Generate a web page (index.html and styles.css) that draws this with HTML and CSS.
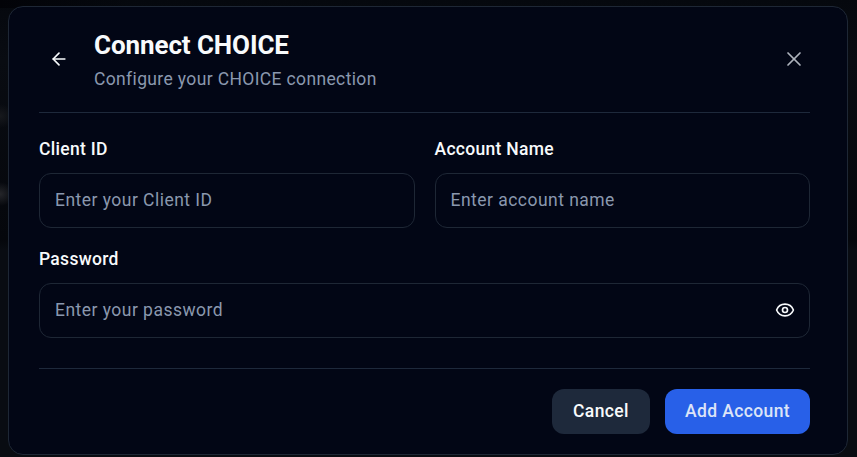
FILE: index.html
```html
<!DOCTYPE html>
<html lang="en">
<head>
    <meta charset="UTF-8">
    <meta name="viewport" content="width=device-width, initial-scale=1.0">
    <title>Connect CHOICE</title>
    <link rel="stylesheet" href="styles.css">
</head>
<body>
    <div class="modal">
        <div class="modal-header">
            <button type="button" class="icon-button" aria-label="Back">
                <svg width="20" height="20" viewBox="0 0 24 24" fill="none" stroke="currentColor" stroke-width="2" stroke-linecap="round" stroke-linejoin="round"><path d="m12 19-7-7 7-7"/><path d="M19 12H5"/></svg>
            </button>
            <div class="heading">
                <h1>Connect CHOICE</h1>
                <p>Configure your CHOICE connection</p>
            </div>
            <button type="button" class="icon-button close" aria-label="Close">
                <svg width="24" height="24" viewBox="0 0 24 24" fill="none" stroke="currentColor" stroke-width="1.7" stroke-linecap="round" stroke-linejoin="round"><path d="M18 6 6 18"/><path d="m6 6 12 12"/></svg>
            </button>
        </div>
        <form>
            <div class="fields">
                <div class="field">
                    <label for="client-id">Client ID</label>
                    <input type="text" id="client-id" placeholder="Enter your Client ID">
                </div>
                <div class="field">
                    <label for="account-name">Account Name</label>
                    <input type="text" id="account-name" placeholder="Enter account name">
                </div>
                <div class="field full">
                    <label for="password">Password</label>
                    <div class="password-box">
                        <input type="password" id="password" placeholder="Enter your password">
                        <button type="button" class="toggle" aria-label="Show password">
                            <svg width="20" height="20" viewBox="0 0 24 24" fill="none" stroke="currentColor" stroke-width="2" stroke-linecap="round" stroke-linejoin="round"><path d="M2.062 12.348a1 1 0 0 1 0-.696 10.75 10.75 0 0 1 19.876 0 1 1 0 0 1 0 .696 10.75 10.75 0 0 1-19.876 0"/><circle cx="12" cy="12" r="3"/></svg>
                        </button>
                    </div>
                </div>
            </div>
            <div class="modal-footer">
                <button type="button" class="btn cancel">Cancel</button>
                <button type="submit" class="btn primary">Add Account</button>
            </div>
        </form>
    </div>
</body>
</html>
```
FILE: styles.css
```css
* {
    box-sizing: border-box;
}
body {
    margin: 0;
    padding: 6px 9px 0 8px;
    height: 457px;
    overflow: hidden;
    font-family: Roboto, sans-serif;
    font-size: 17.5px;
    color: #f8fafc;
    /* blurred page behind the dialog */
    background:
        radial-gradient(ellipse 14px 12px at 0 116px, #17191d, transparent),
        radial-gradient(ellipse 14px 12px at 0 194px, #25262a, transparent),
        linear-gradient(90deg, #020308, transparent 130px) 0 0 / 100% 8px no-repeat,
        linear-gradient(#05080e, #090c12 60px, #05070c 240px, #090c12 250px);
}
button, input {
    font: inherit;
    color: inherit;
}
.modal {
    height: 449px;
    padding: 0 37px 0 30px;
    background-color: #020615;
    border: 1px solid #1e2735;
    border-radius: 15px;
}
.modal-header {
    display: flex;
    align-items: center;
    height: 106px;
    padding-bottom: 2px;
    border-bottom: 1px solid #1e293b;
}
.icon-button {
    display: flex;
    align-items: center;
    justify-content: center;
    width: 40px;
    height: 40px;
    padding: 0;
    border: none;
    background: none;
}
.close {
    width: 32px;
    color: #aeb3bd;
}
.heading {
    flex: 1;
    padding: 6px 0 0 15px;
}
h1 {
    margin: 0;
    font-size: 26px;
    line-height: 34px;
    font-weight: 700;
    letter-spacing: -0.1px;
}
p {
    margin: 0;
    line-height: 34px;
    color: #8a98ae;
    letter-spacing: 0.36px;
}
.fields {
    display: grid;
    grid-template-columns: 1fr 1fr;
    gap: 20px;
    padding: 25px 0 30px;
}
.full {
    grid-column: 1 / 3;
}
label {
    display: block;
    height: 35px;
    line-height: 23px;
    font-weight: 500;
    letter-spacing: 0.3px;
}
input {
    display: block;
    width: 100%;
    height: 55px;
    padding: 0 15px 2px;
    border: 1px solid #1e2735;
    border-radius: 12px;
    background: transparent;
    outline: none;
    letter-spacing: 0.47px;
}
input::placeholder {
    color: #8a98ae;
    opacity: 1;
}
.password-box {
    position: relative;
}
.toggle {
    position: absolute;
    top: 17px;
    right: 15px;
    width: 20px;
    height: 20px;
    padding: 0;
    border: none;
    background: none;
}
.toggle svg {
    display: block;
}
.modal-footer {
    display: flex;
    justify-content: flex-end;
    gap: 15px;
    padding-top: 20px;
    border-top: 1px solid #1e293b;
}
.btn {
    height: 45px;
    padding: 0 0 2px;
    border: none;
    border-radius: 12px;
    font-weight: 500;
    letter-spacing: 0.38px;
}
.cancel {
    width: 98px;
    background-color: #1e293b;
}
.primary {
    width: 145px;
    background-color: #2860e8;
    color: #dce4f7;
}
```
